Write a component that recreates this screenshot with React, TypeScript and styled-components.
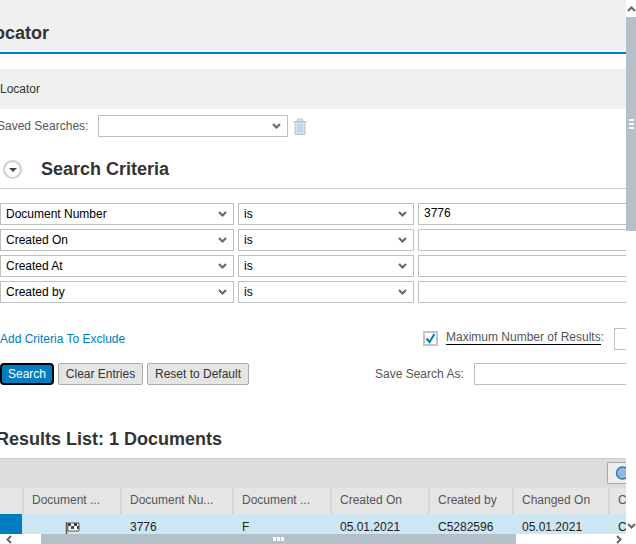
import React from "react";
import styled, { createGlobalStyle } from "styled-components";

const Global = createGlobalStyle`
  html, body { margin: 0; padding: 0; background: #fff; overflow: hidden; }
  body { font-family: "Liberation Sans", Arial, sans-serif; font-size: 12px; color: #333; }
`;

const Viewport = styled.div`
  position: relative;
  width: 636px;
  height: 544px;
  overflow: hidden;
  background: #fff;
`;
const Content = styled.div`
  width: 626px;
  height: 544px;
  overflow: hidden;
  display: flex;
  flex-direction: column;
`;
const TitleBar = styled.header`
  background: #f0f0f0;
  border-bottom: 2px solid #007cc0;
  display: flex;
  align-items: center;
  flex: none;
  padding-top: 14px;
  height: 38px;
`;
const Title = styled.h1`
  margin: 0 0 0 -17px;
  font-size: 18px;
  line-height: 22px;
  font-weight: bold;
  color: #333;
`;
const Tab = styled.div`
  margin-top: 15px;
  height: 40px;
  flex: none;
  background: #f0f0f0;
  display: flex;
  align-items: center;
  color: #333;
`;
const SavedRow = styled.div`
  margin-top: 6px;
  height: 22px;
  flex: none;
  display: flex;
  align-items: center;
`;
const Label = styled.span`
  color: #555;
  white-space: nowrap;
`;
const SavedLabel = styled(Label)`
  margin-left: -3px;
  width: 101px;
  flex: none;
`;
const Select = styled.div<{ $w: number; $ml?: number }>`
  box-sizing: border-box;
  width: ${(p) => p.$w}px;
  margin-left: ${(p) => p.$ml ?? 0}px;
  height: 22px;
  flex: none;
  border: 1px solid #bfbfbf;
  background: #fff;
  display: flex;
  align-items: center;
  justify-content: space-between;
  padding: 0 6px 0 5px;
  color: #000;
`;
const Chevron = styled.svg`
  width: 9px;
  height: 6px;
  flex: none;
`;
const Trash = styled.svg`
  width: 14px;
  height: 17px;
  margin-left: 5px;
  flex: none;
`;
const SectionHead = styled.div`
  margin-top: 21px;
  height: 30px;
  flex: none;
  border-bottom: 1px solid #ccc;
  display: flex;
  align-items: flex-start;
  padding: 0 0 0 3px;
`;
const Toggle = styled.span`
  box-sizing: border-box;
  width: 19px;
  height: 19px;
  margin-top: 2px;
  border: 2px solid #cfcfcf;
  border-radius: 50%;
  display: flex;
  align-items: center;
  justify-content: center;
  flex: none;
`;
const Arrow = styled.span`
  width: 0;
  height: 0;
  border-left: 4px solid transparent;
  border-right: 4px solid transparent;
  border-top: 4px solid #444;
`;
const SectionTitle = styled.h2`
  margin: 0 0 0 19px;
  font-size: 18px;
  line-height: 22px;
  font-weight: bold;
  color: #333;
`;
const Criteria = styled.div`
  margin-top: 14px;
  display: flex;
  flex-direction: column;
  gap: 4px;
  flex: none;
`;
const CriteriaRow = styled.div`
  display: flex;
  height: 22px;
  width: 660px;
`;
const TextInput = styled.div<{ $ml?: number; $w: number }>`
  box-sizing: border-box;
  height: 22px;
  width: ${(p) => p.$w}px;
  margin-left: ${(p) => p.$ml ?? 0}px;
  flex: none;
  border: 1px solid #bfbfbf;
  background: #fff;
  color: #000;
  padding: 0 5px;
  line-height: 19px;
`;
const OptionRow = styled.div`
  margin-top: 25px;
  height: 22px;
  flex: none;
  display: flex;
  align-items: center;
  width: 660px;
`;
const Link = styled.a`
  color: #007cc0;
  width: 423px;
  flex: none;
`;
const Check = styled.span`
  box-sizing: border-box;
  width: 15px;
  height: 15px;
  margin-bottom: 1px;
  border: 2px solid #c4c4c4;
  display: flex;
  align-items: center;
  justify-content: center;
  flex: none;
`;
const MaxLabel = styled.span`
  margin-left: 8px;
  margin-bottom: 4px;
  color: #555;
  width: 168px;
  flex: none;
  white-space: nowrap;
`;
const Underlined = styled.span`
  display: inline-block;
  line-height: 14px;
  border-bottom: 1px solid #000;
`;
const ActionRow = styled.div`
  margin-top: 13px;
  height: 22px;
  flex: none;
  display: flex;
  align-items: center;
  width: 660px;
  gap: 4px;
`;
const Primary = styled.button`
  box-sizing: border-box;
  width: 54px;
  height: 22px;
  flex: none;
  padding: 0;
  border: 2px solid #000;
  border-radius: 4px;
  background: #007cc0;
  color: #fff;
  font: 12px "Liberation Sans", Arial, sans-serif;
`;
const Secondary = styled.button<{ $w: number }>`
  box-sizing: border-box;
  width: ${(p) => p.$w}px;
  height: 22px;
  flex: none;
  padding: 0;
  border: 1px solid #ababab;
  border-radius: 2px;
  background: #e5e5e5;
  color: #333;
  font: 12px "Liberation Sans", Arial, sans-serif;
`;
const SaveLabel = styled(Label)`
  margin-left: 122px;
  width: 95px;
  flex: none;
`;
const ResultsTitle = styled.h2`
  margin: 43px 0 0 -4px;
  font-size: 18px;
  line-height: 22px;
  font-weight: bold;
  color: #333;
  flex: none;
  white-space: nowrap;
`;
const Table = styled.section`
  margin-top: 8px;
  flex: none;
  width: 700px;
  border-top: 1px solid #ccc;
`;
const Toolbar = styled.div`
  height: 29px;
  width: 626px;
  background: #ddd;
  display: flex;
  justify-content: flex-end;
  align-items: flex-start;
  overflow: hidden;
  padding-top: 3px;
  box-sizing: border-box;
`;
const FindBox = styled.div`
  box-sizing: border-box;
  width: 19px;
  height: 22px;
  border: 1px solid #a8a8a8;
  border-right: none;
  border-radius: 2px 0 0 2px;
  background: #eee;
  padding: 2px 0 0 7px;
  overflow: hidden;
`;
const Grid = styled.div<{ $head?: boolean }>`
  display: grid;
  grid-template-columns: 24px 98px 112px 98px 98px 84px 96px 80px;
  background: ${(p) => (p.$head ? "#e5e5e5" : "#cde6f3")};
  height: ${(p) => (p.$head ? "26px" : "20px")};
  overflow: hidden;
`;
const HeadCell = styled.div`
  padding-left: 8px;
  line-height: 25px;
  color: #555;
  white-space: nowrap;
  border-right: 2px solid #d6d6d6;
  box-sizing: border-box;
  height: 26px;
`;
const Cell = styled.div<{ $center?: boolean }>`
  padding-left: 8px;
  line-height: 27px;
  color: #222;
  white-space: nowrap;
  ${(p) => (p.$center ? "padding: 5px 0 0 41px; box-sizing: border-box;" : "")}
`;
const SelectCell = styled.div`
  background: #007cc0;
  margin-right: 2px;
`;
const VTrack = styled.div`
  position: absolute;
  right: 0;
  top: 0;
  width: 10px;
  height: 534px;
  background: #fff;
`;
const VThumb = styled.div`
  position: absolute;
  left: 0;
  top: 17px;
  width: 10px;
  height: 214px;
  background: #b5bfca;
  display: flex;
  flex-direction: column;
  align-items: center;
  justify-content: center;
  gap: 2px;
`;
const VGrip = styled.i`
  width: 5px;
  height: 2px;
  background: #fff;
`;
const HTrack = styled.div`
  position: absolute;
  left: 0;
  bottom: 0;
  width: 626px;
  height: 10px;
  background: #fff;
`;
const HThumb = styled.div`
  position: absolute;
  left: 41px;
  top: 0;
  width: 475px;
  height: 10px;
  background: #b5bfca;
  display: flex;
  align-items: center;
  justify-content: center;
  gap: 1px;
`;
const HGrip = styled.i`
  width: 3px;
  height: 4px;
  background: #fff;
`;
const ScrollArrow = styled.svg<{ $x: number; $y: number }>`
  position: absolute;
  left: ${(p) => p.$x}px;
  top: ${(p) => p.$y}px;
`;

const Down = () => (
  <Chevron viewBox="0 0 9 6">
    <path d="M1 1l3.5 3.5L8 1" fill="none" stroke="#666" strokeWidth="2" />
  </Chevron>
);

const rows = ["Document Number", "Created On", "Created At", "Created by"];

export default function App() {
  return (
    <Viewport>
      <Global />
      <Content>
        <TitleBar>
          <Title>Locator</Title>
        </TitleBar>
        <Tab>Locator</Tab>
        <SavedRow>
          <SavedLabel>Saved Searches:</SavedLabel>
          <Select $w={190}>
            <span />
            <Down />
          </Select>
          <Trash viewBox="0 0 14 17">
            <path
              d="M0.5 3.5h13M4.5 3V1h5v2M2 4h10v12.5H2zM5 6v8.5M7 6v8.5M9 6v8.5"
              fill="#d7e6ef"
              stroke="#a9cadc"
              strokeWidth="1"
            />
          </Trash>
        </SavedRow>
        <SectionHead>
          <Toggle>
            <Arrow />
          </Toggle>
          <SectionTitle>Search Criteria</SectionTitle>
        </SectionHead>
        <Criteria>
          {rows.map((r, i) => (
            <CriteriaRow key={r}>
              <Select $w={234}>
                {r}
                <Down />
              </Select>
              <Select $w={176} $ml={4}>
                is
                <Down />
              </Select>
              <TextInput $w={240} $ml={4}>
                {i === 0 ? "3776" : ""}
              </TextInput>
            </CriteriaRow>
          ))}
        </Criteria>
        <OptionRow>
          <Link>Add Criteria To Exclude</Link>
          <Check>
            <svg width="11" height="11" viewBox="0 0 11 11">
              <path d="M1.5 5.5l3 3.5 5-8" fill="none" stroke="#007cc0" strokeWidth="2" />
            </svg>
          </Check>
          <MaxLabel>
            <Underlined>Maximum Number of Results</Underlined>:
          </MaxLabel>
          <TextInput $w={40}></TextInput>
        </OptionRow>
        <ActionRow>
          <Primary>Search</Primary>
          <Secondary $w={85}>Clear Entries</Secondary>
          <Secondary $w={102}>Reset to Default</Secondary>
          <SaveLabel>Save Search As:</SaveLabel>
          <TextInput $w={160}></TextInput>
        </ActionRow>
        <ResultsTitle>Results List: 1 Documents</ResultsTitle>
        <Table>
          <Toolbar>
            <FindBox>
              <svg width="20" height="18" viewBox="0 0 20 18">
                <circle cx="7.5" cy="8" r="6" fill="#8fb8dc" stroke="#2f79b5" strokeWidth="1.5" />
              </svg>
            </FindBox>
          </Toolbar>
          <Grid $head>
            <HeadCell />
            <HeadCell>Document ...</HeadCell>
            <HeadCell>Document Nu...</HeadCell>
            <HeadCell>Document ...</HeadCell>
            <HeadCell>Created On</HeadCell>
            <HeadCell>Created by</HeadCell>
            <HeadCell>Changed On</HeadCell>
            <HeadCell>C</HeadCell>
          </Grid>
          <Grid>
            <SelectCell />
            <Cell $center>
              <svg width="16" height="14" viewBox="0 0 16 14">
                <path d="M1.5 0v14" stroke="#555" strokeWidth="1.5" />
                <path d="M3 1h11v8H3z" fill="#fff" stroke="#555" />
                <path d="M3 1h3v3H3zM9 1h3v3H9zM6 4h3v3H6zM12 4h2v3h-2z" fill="#444" />
              </svg>
            </Cell>
            <Cell>3776</Cell>
            <Cell>F</Cell>
            <Cell>05.01.2021</Cell>
            <Cell>C5282596</Cell>
            <Cell>05.01.2021</Cell>
            <Cell>C</Cell>
          </Grid>
        </Table>
      </Content>
      <VTrack>
        <VThumb>
          <VGrip />
          <VGrip />
          <VGrip />
        </VThumb>
        <ScrollArrow $x={1} $y={6} width="9" height="6" viewBox="0 0 9 6">
          <path d="M1 5l3.5-3.5L8 5" fill="none" stroke="#666" strokeWidth="2" />
        </ScrollArrow>
        <ScrollArrow $x={1} $y={523} width="9" height="6" viewBox="0 0 9 6">
          <path d="M1 1l3.5 3.5L8 1" fill="none" stroke="#666" strokeWidth="2" />
        </ScrollArrow>
      </VTrack>
      <HTrack>
        <HThumb>
          <HGrip />
          <HGrip />
          <HGrip />
        </HThumb>
        <ScrollArrow $x={6} $y={1} width="6" height="9" viewBox="0 0 6 9">
          <path d="M5 1L1.5 4.5 5 8" fill="none" stroke="#666" strokeWidth="2" />
        </ScrollArrow>
        <ScrollArrow $x={616} $y={1} width="6" height="9" viewBox="0 0 6 9">
          <path d="M1 1l3.5 3.5L1 8" fill="none" stroke="#666" strokeWidth="2" />
        </ScrollArrow>
      </HTrack>
    </Viewport>
  );
}
